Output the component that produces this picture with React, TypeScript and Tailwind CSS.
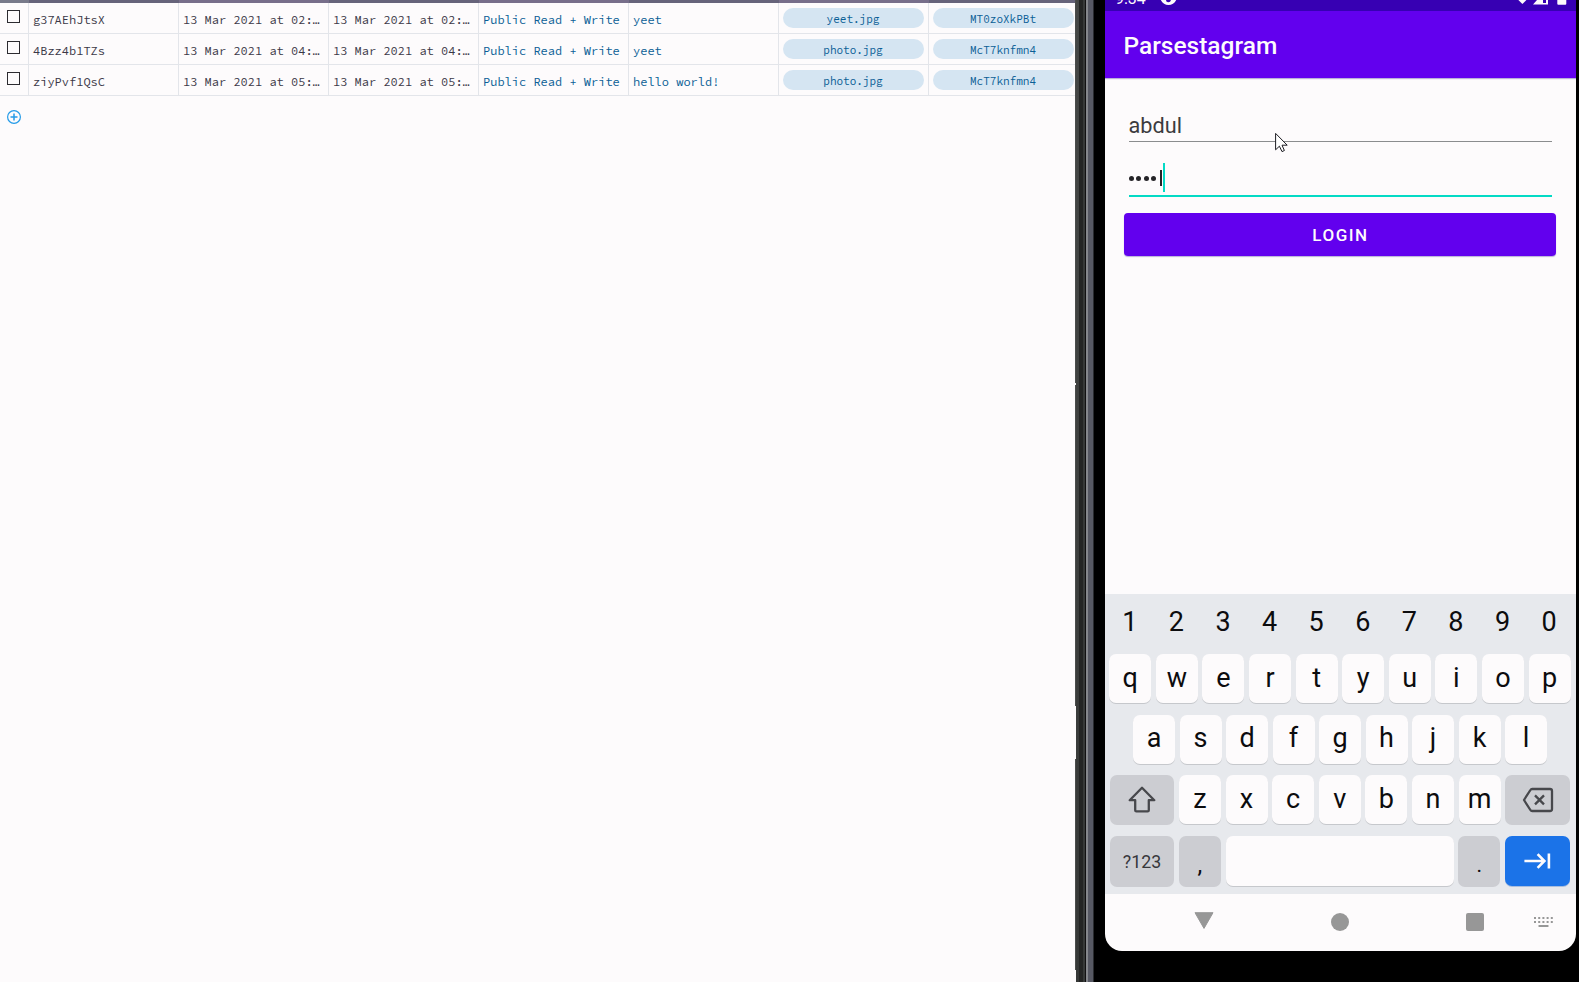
import React from "react";

const rows = [
  ["g37AEhJtsX", "13 Mar 2021 at 02:…", "yeet", "yeet.jpg", "MT0zoXkPBt"],
  ["4Bzz4b1TZs", "13 Mar 2021 at 04:…", "yeet", "photo.jpg", "McT7knfmn4"],
  ["ziyPvf1QsC", "13 Mar 2021 at 05:…", "hello world!", "photo.jpg", "McT7knfmn4"],
];

function Cell({ children, blue }: { children: React.ReactNode; blue?: boolean }) {
  return (
    <div
      className={`w-[150px] shrink-0 whitespace-nowrap border-r border-[#e3e5ea] pl-[4px] pt-[1px] text-[12px] leading-[32px] ${
        blue ? "text-[#0b5f96]" : "text-[#3b3847]"
      }`}
    >
      {children}
    </div>
  );
}

function Pill({ children }: { children: React.ReactNode }) {
  return (
    <div className="w-[150px] shrink-0 border-r border-[#e3e5ea] pl-[4px] pt-[5px]">
      <div className="h-[20px] w-[141px] rounded-full bg-[#d5e5f2] pr-px text-center text-[11px] leading-[22px] text-[#0b5f96]">
        {children}
      </div>
    </div>
  );
}

function Browser() {
  return (
    <div className="flex w-[1075px] shrink-0 flex-col overflow-hidden bg-[#fdfbfc] font-['Source_Code_Pro','Liberation_Mono',monospace]">
      <div className="flex h-[3px] shrink-0">
        <div className="w-[29px] shrink-0 bg-[#787a8a]" />
        {[0, 1, 2, 3, 4, 5, 6].map((i) => (
          <div key={i} className={`w-[150px] shrink-0 ${i % 2 ? "bg-[#776e8a]" : "bg-[#66637a]"}`} />
        ))}
      </div>
      {rows.map((r, i) => (
        <div key={i} className="flex h-[31px] shrink-0 border-b border-[#e3e5ea]">
          <div className="w-[29px] shrink-0 border-r border-[#e3e5ea] pl-[7px] pt-[7px]">
            <div className="size-[13px] border border-[#2c2b30] bg-[#fdfbfc]" />
          </div>
          <Cell>{r[0]}</Cell>
          <Cell>{r[1]}</Cell>
          <Cell>{r[1]}</Cell>
          <Cell blue>Public Read + Write</Cell>
          <Cell blue>{r[2]}</Cell>
          <Pill>{r[3]}</Pill>
          <Pill>{r[4]}</Pill>
        </div>
      ))}
      <svg className="ml-[7px] mt-[14px]" width="14" height="14" viewBox="0 0 14 14" fill="none" stroke="#249be8">
        <circle cx="7" cy="7" r="6.4" strokeWidth="1.2" />
        <path d="M7 3.5v7M3.5 7h7" strokeWidth="1.5" />
      </svg>
    </div>
  );
}

function Key({ k }: { k: string }) {
  return (
    <div className="h-[49px] w-[42px] shrink-0 rounded-[7px] bg-[#fdfbfc] text-center text-[27px] text-[#0c0c0e] shadow-[0_1px_0_#c6c8cc]">
      {k}
    </div>
  );
}

function Keyboard() {
  return (
    <div className="flex h-[300px] shrink-0 flex-col bg-[#e7e9ed] text-[#0c0c0e]">
      <div className="flex h-[60px] gap-[4.6px] pl-[3.8px]">
        {"1234567890".split("").map((k) => (
          <div key={k} className="w-[42px] shrink-0 text-center text-[27px] leading-[57px]">
            {k}
          </div>
        ))}
      </div>
      <div className="flex h-[61px] gap-[4.6px] pl-[4.2px] leading-[48px]">
        {"qwertyuiop".split("").map((k) => <Key key={k} k={k} />)}
      </div>
      <div className="flex h-[60px] gap-[4.5px] pl-[28px] leading-[47px]">
        {"asdfghjkl".split("").map((k) => <Key key={k} k={k} />)}
      </div>
      <div className="flex h-[61px] gap-[4.6px] pl-[4.7px] leading-[48px]">
        <div className="flex h-[50px] w-[64.7px] shrink-0 items-center justify-center rounded-[7px] bg-[#cccdd2]">
          <svg width="28" height="28" viewBox="0 0 28 28" fill="none" stroke="#47484c" strokeWidth="2.3" strokeLinejoin="round">
            <path d="M14 1.7L1.7 14.2H7.2V24.2Q7.2 25.4 8.4 25.4H19.6Q20.8 25.4 20.8 24.2V14.2H26.3Z" />
          </svg>
        </div>
        {"zxcvbnm".split("").map((k) => <Key key={k} k={k} />)}
        <div className="flex h-[50px] w-[65px] shrink-0 items-center justify-center rounded-[7px] bg-[#cccdd2]">
          <svg width="32" height="26" viewBox="0 0 32 26" fill="none" stroke="#47484c" strokeWidth="2.3" strokeLinejoin="round">
            <path d="M10.2 2H28Q30 2 30 4V22Q30 24 28 24H10.2Q9 24 8.4 23L2 13L8.4 3Q9 2 10.2 2Z" />
            <path d="M13 8.4l9 9M22 8.4l-9 9" />
          </svg>
        </div>
      </div>
      <div className="flex gap-[4.6px] pl-[4.7px]">
        <div className="h-[51px] w-[64.7px] shrink-0 rounded-[7px] bg-[#cccdd2] text-center text-[17.8px] leading-[52px] text-[#37383c]">
          ?123
        </div>
        <div className="h-[51px] w-[42px] shrink-0 rounded-[7px] bg-[#cccdd2] text-center text-[24px] leading-[59px]">,</div>
        <div className="h-[50px] w-[228.2px] shrink-0 rounded-[7px] bg-[#fdfbfc] shadow-[0_1px_0_#c6c8cc]" />
        <div className="h-[51px] w-[42px] shrink-0 rounded-[7px] bg-[#cccdd2] text-center text-[21px] leading-[58px]">.</div>
        <div className="flex h-[50px] w-[65px] shrink-0 items-center justify-center rounded-[7px] bg-[#1b73e8] shadow-[0_1px_0_#a9bede]">
          <svg width="28" height="18" viewBox="0 0 28 18" fill="none" stroke="#fdfbfc" strokeWidth="2.6">
            <path d="M1.4 9H21M14.6 2.2L21.4 9L14.6 15.8M25.9 1.6V16.4" />
          </svg>
        </div>
      </div>
    </div>
  );
}

function NavBar() {
  return (
    <div className="flex h-[57px] shrink-0 pt-[18px]">
      <svg className="ml-[89.3px]" width="20" height="18" viewBox="0 0 20 18" fill="#979797" stroke="#979797" strokeLinejoin="round">
        <path d="M1 .7H19L10 16.4Z" />
      </svg>
      <div className="ml-[117px] mt-[0.6px] size-[18px] rounded-full bg-[#979797]" />
      <div className="ml-[117.1px] mt-[1px] size-[18px] rounded-[2px] bg-[#979797]" />
      <svg className="ml-[49.9px] mt-[5px]" width="19" height="11" viewBox="0 0 19 11" fill="#979797">
        {[0, 4.2, 8.4, 12.6, 16.8].map((x) => (
          <g key={x}>
            <rect x={x} y="0" width="2" height="2" />
            <rect x={x} y="4" width="2" height="2" />
          </g>
        ))}
        <rect x="4.5" y="8" width="10" height="2" rx="0.6" />
      </svg>
    </div>
  );
}

function Phone() {
  return (
    <div className="relative flex flex-1 bg-black">
      <div className="flex w-[30px] shrink-0">
        <div className="flex w-[1px] flex-col bg-[#4a4c4b]">
          <div className="mt-[383px] h-[2px] bg-[#fdfbfc]" />
          <div className="mt-[321px] h-[53px] bg-[#fdfbfc]" />
          <div className="mt-[211px] h-[12px] bg-[#fdfbfc]" />
        </div>
        <div className="w-[3px] bg-linear-to-b from-[#454746] to-[#363837]" />
        <div className="w-[4px] bg-[#242524]" />
        <div className="w-[2px] bg-[#373938]" />
        <div className="w-[1px] bg-[#111]" />
        <div className="w-[2px] bg-[#85878c]" />
        <div className="w-[5px] bg-[#575964]" />
        <div className="w-[1px] bg-[#2a2c30]" />
      </div>
      <div className="flex h-[951px] w-[471px] shrink-0 flex-col overflow-hidden rounded-b-[17px] bg-[#fdfbfc]">
        <div className="flex h-[11px] shrink-0 bg-[#3700b3] text-[#fdfbfc]">
          <div className="-mt-[9px] ml-[10px] w-[45px] text-[16px] leading-[16px]">9:34</div>
          <svg width="17" height="6" viewBox="0 0 17 6">
            <path d="M.8 0C2.6 3.4 5.2 5 8.5 5S14.6 3.4 16.2 0H11Q10.4 2.4 8 2.2Q5.8 1.8 6 0Z" fill="#fdfbfc" />
          </svg>
          <svg className="ml-[340px]" width="50" height="6" viewBox="0 0 50 6" fill="#fdfbfc">
            <path d="M1.4 0H9.4L5.4 4Z" />
            <path d="M20 0H26V3H29V0H31V4.6H16Z" />
            <path d="M40.3 0H49.3V3.8Q49.3 4.8 48.3 4.8H41.3Q40.3 4.8 40.3 3.8Z" />
          </svg>
        </div>
        <div className="h-[67px] shrink-0 bg-[#6200ee] pl-[18.5px] text-[24.5px] font-medium leading-[70px] text-[#fdfbfc] shadow-[0_1px_1px_#b9b0d8]">
          Parsestagram
        </div>
        <div className="ml-[23.5px] mr-[24.5px] mt-[23px] h-[41px] shrink-0 border-b border-[#8b8d8e] text-[21.7px] leading-[49px] text-[#3c3b3f]">
          abdul
        </div>
        <div className="ml-[23.5px] mr-[24.5px] mt-[20px] flex h-[35px] shrink-0 items-start border-b-2 border-[#03dac5]">
          <div className="ml-[0.5px] mt-[14px] flex gap-[2.4px]">
            {[0, 1, 2, 3].map((i) => (
              <div key={i} className="size-[5px] rounded-full bg-[#252428]" />
            ))}
          </div>
          <div className="ml-[4px] mt-[8px] h-[16px] w-[1.5px] bg-[#252428]" />
          <div className="ml-[1px] mt-[1px] h-[29px] w-[2.5px] bg-[#03dac5]" />
        </div>
        <div className="ml-[19px] mr-[20px] mt-[16px] h-[43px] shrink-0 rounded-[4px] bg-[#6200ee] pl-px text-center text-[17px] font-medium leading-[44px] tracking-[1.5px] text-[#fdfbfc] shadow-[0_1px_1px_#b9b0d8]">
          LOGIN
        </div>
        <div className="flex-1" />
        <Keyboard />
        <NavBar />
      </div>
      <svg className="absolute left-[200px] top-[132px]" width="14" height="21" viewBox="0 0 14 21">
        <path d="M.6 1.4V17.8L4.4 14.2L7 19.6L9.4 18.5L7 13.2H12.2Z" fill="#fff" stroke="#1c1c22" strokeWidth="1" />
      </svg>
    </div>
  );
}

export default function App() {
  return (
    <div className="flex h-[982px] w-[1579px] overflow-hidden font-[Roboto,sans-serif]">
      <Browser />
      <Phone />
    </div>
  );
}
